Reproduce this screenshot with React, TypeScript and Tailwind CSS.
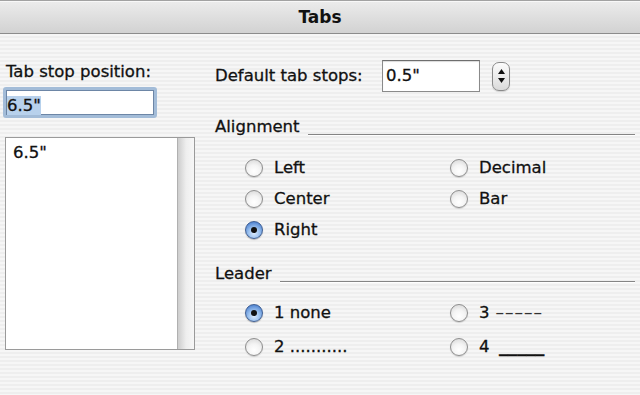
import React from "react";

function Radio({ checked }: { checked?: boolean }) {
  return checked ? (
    <div className="flex h-[18px] w-[18px] shrink-0 items-center justify-center rounded-full border border-[#3f5f93] bg-[radial-gradient(circle_at_50%_70%,#dbeafc_0%,#9cc2ef_40%,#4a7fcf_85%,#3a68b3_100%)] shadow-[0_1px_1px_rgba(0,0,0,0.25)]">
      <div className="h-[6px] w-[6px] rounded-full bg-[#111]" />
    </div>
  ) : (
    <div className="h-[18px] w-[18px] shrink-0 rounded-full border border-[#8e8e8e] bg-[radial-gradient(circle_at_50%_70%,#ffffff_0%,#f4f4f4_45%,#d2d2d2_100%)] shadow-[0_1px_1px_rgba(0,0,0,0.15)]" />
  );
}

function RadioItem({ checked, children }: { checked?: boolean; children: React.ReactNode }) {
  return (
    <div className="flex items-center gap-[11px]">
      <Radio checked={checked} />
      <span className="leading-[20px] whitespace-pre">{children}</span>
    </div>
  );
}

function GroupHeader({ label }: { label: string }) {
  return (
    <div className="flex h-[20px] items-start gap-[8px] pr-[5px]">
      <span className="leading-[20px]">{label}</span>
      <div className="mt-[17px] h-[2px] flex-1 border-t border-[#858585] border-b border-b-[#ffffff]" />
    </div>
  );
}

export default function App() {
  return (
    <div
      className="h-[395px] w-[640px] overflow-hidden bg-[repeating-linear-gradient(180deg,#eeeeee_0px,#eeeeee_2px,#f6f6f6_2px,#f6f6f6_4px)] text-[16.5px] text-[#111] [-webkit-text-stroke:0.3px_#111]"
      style={{ fontFamily: '"DejaVu Sans", "Liberation Sans", sans-serif' }}
    >
      {/* Title bar */}
      <div className="flex h-[34px] items-center justify-center border-t border-[#a2a2a2] border-b border-b-[#8c8c8c] bg-gradient-to-b from-[#ececec] to-[#d2d2d2] shadow-[inset_0_1px_0_#f8f8f8]">
        <span className="text-[17px] font-bold leading-[20px] text-[#111] [-webkit-text-stroke:0px]">Tabs</span>
      </div>

      <div className="flex">
        {/* Left column */}
        <div className="flex w-[200px] flex-col">
          <div className="mt-[28px] pl-[6px] leading-[20px]">Tab stop position:</div>
          <div className="ml-[3px] mt-[5px] h-[31px] w-[154px] rounded-[3px] border-[3px] border-[#a3bcd8] bg-[#a3bcd8]">
            <div className="h-full w-full border border-[#6d86a6] bg-white pt-[3px]">
              <span className="bg-[#b8d1ec] leading-[20px]">6.5"</span>
            </div>
          </div>
          <div className="ml-[5px] mt-[19px] flex h-[213px] w-[190px] border border-[#9a9a9a] bg-white">
            <div className="flex-1 pl-[7px] pt-[5px] leading-[20px]">6.5"</div>
            <div className="w-[17px] border-l border-[#b0b0b0] bg-gradient-to-r from-[#cdcdcd] via-[#eeeeee] to-[#f7f7f7]" />
          </div>
        </div>

        {/* Right column */}
        <div className="flex flex-1 flex-col pl-[15px]">
          <div className="mt-[26px] flex h-[32px] items-center">
            <span className="w-[167px] leading-[20px]">Default tab stops:</span>
            <div className="flex h-[32px] w-[98px] items-center border border-[#8a8a8a] border-t-[#6e6e6e] bg-white pl-[3px] shadow-[inset_0_1px_1px_rgba(0,0,0,0.15)]">
              <span className="leading-[20px]">0.5"</span>
            </div>
            <div className="ml-[12px] flex h-[29px] w-[18px] flex-col items-center justify-center gap-[4px] rounded-[7px] border border-[#8a8a8a] bg-gradient-to-b from-[#fbfbfb] via-[#ececec] to-[#dadada] shadow-[0_1px_1px_rgba(0,0,0,0.15)]">
              <svg width="7" height="5" viewBox="0 0 7 5">
                <path d="M3.5 0 L7 5 L0 5 Z" fill="#111" />
              </svg>
              <svg width="7" height="5" viewBox="0 0 7 5">
                <path d="M0 0 L7 0 L3.5 5 Z" fill="#111" />
              </svg>
            </div>
          </div>

          <div className="mt-[25px]">
            <GroupHeader label="Alignment" />
          </div>

          <div className="mt-[15px] grid grid-cols-[205px_1fr] pl-[30px]">
            <div className="flex h-[31px] items-center">
              <RadioItem>Left</RadioItem>
            </div>
            <div className="flex h-[31px] items-center">
              <RadioItem>Decimal</RadioItem>
            </div>
            <div className="flex h-[31px] items-center">
              <RadioItem>Center</RadioItem>
            </div>
            <div className="flex h-[31px] items-center">
              <RadioItem>Bar</RadioItem>
            </div>
            <div className="flex h-[31px] items-center">
              <RadioItem checked>Right</RadioItem>
            </div>
            <div className="h-[31px]" />
          </div>

          <div className="mt-[19px]">
            <GroupHeader label="Leader" />
          </div>

          <div className="mt-[12px] grid grid-cols-[205px_1fr] pl-[30px]">
            <div className="flex h-[34px] items-center">
              <RadioItem checked>1 none</RadioItem>
            </div>
            <div className="flex h-[34px] items-center">
              <RadioItem>
                3 <span className="inline-block origin-left scale-x-[1.6] text-[#333] [-webkit-text-stroke:0px]">-----</span>
              </RadioItem>
            </div>
            <div className="flex h-[34px] items-center">
              <RadioItem>2 ...........</RadioItem>
            </div>
            <div className="flex h-[34px] items-center">
              <RadioItem>
                4 <span className="ml-[4px] inline-block origin-left scale-x-[1.1] font-bold">_____</span>
              </RadioItem>
            </div>
          </div>
        </div>
      </div>
    </div>
  );
}
